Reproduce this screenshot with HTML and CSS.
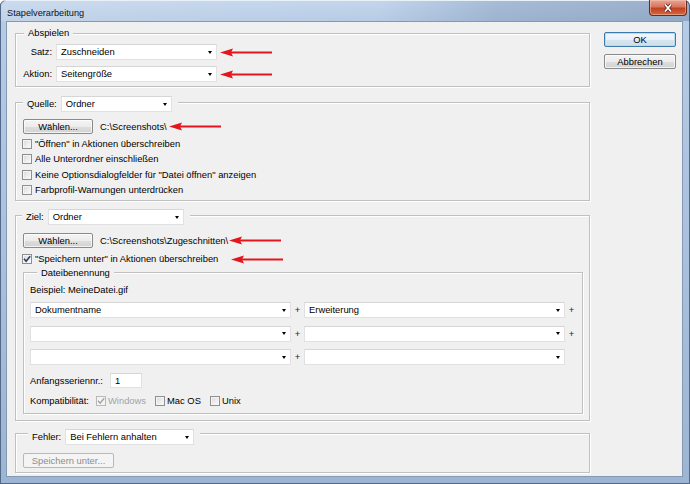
FILE: index.html
```html
<!DOCTYPE html>
<html>
<head>
<meta charset="utf-8">
<title>Stapelverarbeitung</title>
<link rel="stylesheet" href="styles.css">
</head>
<body>
<div class="window">
  <div class="titlebar">
    <span class="title">Stapelverarbeitung</span>
    <div class="close">
      <svg width="12" height="10" viewBox="0 0 12 10"><path d="M3 1.5 L9 8.5 M9 1.5 L3 8.5" stroke="#5b1f14" stroke-width="3.4" fill="none"/><path d="M3 1.5 L9 8.5 M9 1.5 L3 8.5" stroke="#fff" stroke-width="1.8" fill="none"/></svg>
    </div>
  </div>
  <div class="client">
    <div class="main">
      <div class="group g-play">
        <div class="legend lg-play"><span>Abspielen</span></div>
        <div class="play-grid">
          <span class="lbl">Satz:</span>
          <div class="sel w-play"><span>Zuschneiden</span><i class="caret"></i></div>
          <svg class="arrow" width="52" height="9" viewBox="0 0 52 9"><path d="M0 4.5 L13 0.5 L11 4.5 L13 8.5 Z" fill="#e2161c"/><rect x="10" y="3.5" width="42" height="2" fill="#e2161c"/></svg>
          <span class="lbl">Aktion:</span>
          <div class="sel w-play"><span>Seitengröße</span><i class="caret"></i></div>
          <svg class="arrow" width="52" height="9" viewBox="0 0 52 9"><path d="M0 4.5 L13 0.5 L11 4.5 L13 8.5 Z" fill="#e2161c"/><rect x="10" y="3.5" width="42" height="2" fill="#e2161c"/></svg>
        </div>
      </div>

      <div class="group g-src">
        <div class="legend lg-src"><span class="lg-lbl">Quelle:</span><div class="sel w-src"><span>Ordner</span><i class="caret"></i></div></div>
        <div class="pathrow">
          <button class="btn btn-pick">Wählen...</button>
          <span class="path">C:\Screenshots\</span>
          <svg class="arrow a-src" width="52" height="9" viewBox="0 0 52 9"><path d="M0 4.5 L13 0.5 L11 4.5 L13 8.5 Z" fill="#e2161c"/><rect x="10" y="3.5" width="42" height="2" fill="#e2161c"/></svg>
        </div>
        <div class="cblist">
          <label class="cbrow"><span class="cb"></span>"Öffnen" in Aktionen überschreiben</label>
          <label class="cbrow"><span class="cb"></span>Alle Unterordner einschließen</label>
          <label class="cbrow"><span class="cb"></span>Keine Optionsdialogfelder für "Datei öffnen" anzeigen</label>
          <label class="cbrow"><span class="cb"></span>Farbprofil-Warnungen unterdrücken</label>
        </div>
      </div>

      <div class="group g-dst">
        <div class="legend lg-dst"><span class="lg-lbl">Ziel:</span><div class="sel w-dst"><span>Ordner</span><i class="caret"></i></div></div>
        <div class="pathrow pr-dst">
          <button class="btn btn-pick">Wählen...</button>
          <span class="path">C:\Screenshots\Zugeschnitten\</span>
          <svg class="arrow a-dst" width="52" height="9" viewBox="0 0 52 9"><path d="M0 4.5 L13 0.5 L11 4.5 L13 8.5 Z" fill="#e2161c"/><rect x="10" y="3.5" width="42" height="2" fill="#e2161c"/></svg>
        </div>
        <div class="cbrow cb-save">
          <span class="cb"><svg width="8" height="8" viewBox="0 0 8 8"><path d="M1 3.8 L3.1 6.2 L7.2 1.2" stroke="#2b3a6b" stroke-width="1.6" fill="none"/></svg></span>
          <span>"Speichern unter" in Aktionen überschreiben</span>
          <svg class="arrow a-save" width="52" height="9" viewBox="0 0 52 9"><path d="M0 4.5 L13 0.5 L11 4.5 L13 8.5 Z" fill="#e2161c"/><rect x="10" y="3.5" width="42" height="2" fill="#e2161c"/></svg>
        </div>

        <div class="group g-name">
          <div class="legend lg-name"><span>Dateibenennung</span></div>
          <div class="example">Beispiel: MeineDatei.gif</div>
          <div class="name-grid">
            <div class="sel"><span>Dokumentname</span><i class="caret"></i></div>
            <span class="plus">+</span>
            <div class="sel"><span>Erweiterung</span><i class="caret"></i></div>
            <span class="plus">+</span>
            <div class="sel"><span></span><i class="caret"></i></div>
            <span class="plus">+</span>
            <div class="sel"><span></span><i class="caret"></i></div>
            <span class="plus">+</span>
            <div class="sel"><span></span><i class="caret"></i></div>
            <span class="plus">+</span>
            <div class="sel"><span></span><i class="caret"></i></div>
            <span class="plus"></span>
          </div>
          <div class="serial">
            <span class="serial-lbl">Anfangsseriennr.:</span>
            <div class="input">1</div>
          </div>
          <div class="compat">
            <span class="compat-lbl">Kompatibilität:</span>
            <span class="opt disabled"><span class="cb cb-dis"><svg width="8" height="8" viewBox="0 0 8 8"><path d="M1 3.8 L3.1 6.2 L7.2 1.2" stroke="#a4a4a4" stroke-width="1.4" fill="none"/></svg></span>Windows</span>
            <span class="opt"><span class="cb"></span>Mac OS</span>
            <span class="opt"><span class="cb"></span>Unix</span>
          </div>
        </div>
      </div>

      <div class="group g-err">
        <div class="legend lg-err"><span class="lg-lbl">Fehler:</span><div class="sel w-err"><span>Bei Fehlern anhalten</span><i class="caret"></i></div></div>
        <button class="btn btn-save" disabled>Speichern unter...</button>
      </div>
    </div>

    <div class="side">
      <button class="btn btn-side btn-ok">OK</button>
      <button class="btn btn-side">Abbrechen</button>
    </div>
  </div>
</div>
</body>
</html>
```
FILE: styles.css
```css
html, body {
  margin: 0;
  padding: 0;
}
body {
  font-family: "Liberation Sans", Arial, sans-serif;
  font-size: 9.4px;
  color: #000;
  background: #fff;
}
.window {
  width: 690px;
  height: 484px;
  box-sizing: border-box;
  display: flex;
  flex-direction: column;
  background: linear-gradient(180deg, #c3d6ec 0px, #b6cbe4 22px, #a8bfda 60%, #9cb5d2 100%);
  box-shadow: inset 0 0 0 1px #53698a;
  border-radius: 6px 6px 0 0;
  overflow: hidden;
}
.titlebar {
  height: 21px;
  display: flex;
  justify-content: space-between;
  align-items: flex-start;
  background: linear-gradient(90deg, rgba(255,255,255,0.15) 0%, rgba(255,255,255,0) 55%, rgba(40,70,110,0.18) 72%, rgba(50,80,120,0.28) 100%);
  box-shadow: inset 0 1px 0 #e8f0f8, inset 1px 0 0 #53698a;
}
.title {
  margin: 7px 0 0 7px;
  font-size: 9.2px;
  line-height: 12px;
  color: #111;
}
.close {
  width: 38px;
  height: 16px;
  margin-right: 3px;
  box-sizing: border-box;
  border: 1px solid #6b2a1f;
  border-top: none;
  border-radius: 0 0 4px 4px;
  background: linear-gradient(180deg, #e7a494 0%, #d8765f 45%, #c2411f 55%, #cf6a45 100%);
  box-shadow: inset 0 0 0 1px rgba(255,210,190,0.45);
  display: flex;
  align-items: center;
  justify-content: center;
}
.client {
  flex: 1;
  margin: 0 7px 7px 6px;
  box-sizing: border-box;
  background: #f0f0f0;
  border: 1px solid #8599b4;
  display: flex;
  align-items: flex-start;
}
.main {
  width: 575px;
  margin-left: 8px;
  padding-top: 11px;
}
.side {
  margin-left: 14px;
  padding-top: 10px;
  display: flex;
  flex-direction: column;
  gap: 7px;
}

/* group boxes */
.group {
  border: 1px solid #c0c0c0;
  box-shadow: inset 1px 1px 0 #fff, 1px 1px 0 #fff;
  padding-left: 6px;
}
.legend {
  display: flex;
  align-items: center;
  width: max-content;
  background: #f0f0f0;
  padding: 0 4px;
  line-height: 12px;
}
.lg-lbl {
  margin-right: 4px;
}
.lg-play { margin: -7px 0 0 2px; height: 12px; }
.lg-src { margin: -7px 0 0 1px; height: 16px; padding-right: 6px; }
.lg-dst { margin: -7px 0 0 0; height: 16px; padding-right: 6px; }
.lg-name { margin: -6px 0 0 7px; height: 12px; }
.lg-err { margin: -5px 0 0 6px; height: 16px; padding-right: 6px; }

.g-play { padding-bottom: 4px; }
.g-src { margin-top: 15px; padding-bottom: 2px; }
.g-dst { margin-top: 14px; padding-bottom: 6px; }
.g-err { margin-top: 12px; padding-bottom: 4px; }

/* select-like dropdowns */
.sel {
  display: flex;
  align-items: center;
  height: 16px;
  box-sizing: border-box;
  background: #fff;
  border: 1px solid #e1e1e1;
  border-top-color: #d6d6d6;
  padding-left: 4px;
  line-height: 14px;
  white-space: nowrap;
}
.caret {
  margin-left: auto;
  margin-right: 4px;
  width: 0;
  height: 0;
  border-left: 2.5px solid transparent;
  border-right: 2.5px solid transparent;
  border-top: 3px solid #000;
}
.w-play { width: 161px; }
.w-src { width: 111px; }
.w-dst { width: 136px; }
.w-err { width: 129px; }

.play-grid {
  display: grid;
  grid-template-columns: 30px 161px auto;
  column-gap: 4px;
  row-gap: 6px;
  margin-top: 5px;
  align-items: center;
}
.lbl {
  text-align: right;
  line-height: 12px;
}
.arrow {
  display: block;
  margin-left: -1px;
}

/* buttons */
.btn {
  font-family: inherit;
  font-size: 9.4px;
  color: #000;
  height: 15px;
  box-sizing: border-box;
  padding: 0;
  border: 1px solid #8a8a8a;
  border-radius: 2px;
  background: linear-gradient(180deg, #f4f4f4 0%, #ececec 50%, #dedede 51%, #d2d2d2 100%);
  box-shadow: inset 0 0 0 1px rgba(255,255,255,0.7);
  line-height: 13px;
}
.btn-side { width: 72px; }
.btn-ok {
  border-color: #3d7bad;
  box-shadow: inset 0 0 0 1px #b6dcf4;
  background: linear-gradient(180deg, #f2f8fc 0%, #e8f1f8 50%, #d9e6f0 51%, #cfdde9 100%);
}
.btn-pick { width: 70px; margin-left: 1px; }
.btn-save {
  width: 91px;
  margin-left: 1px;
  margin-top: 8px;
  display: block;
  color: #8c8c8c;
  border-color: #b5b9bc;
  background: #f4f4f4;
  box-shadow: none;
}

.pathrow {
  display: flex;
  align-items: center;
  margin-top: 7px;
}
.pr-dst { margin-top: 8px; }
.path {
  margin-left: 7px;
  line-height: 12px;
}
.a-src { margin-left: 2px; }
.a-dst { margin-left: 1px; }

.cblist {
  margin-top: 2px;
}
.cbrow {
  display: flex;
  align-items: center;
  height: 15.5px;
  line-height: 12px;
  white-space: nowrap;
}
.cb {
  width: 10px;
  height: 10px;
  box-sizing: border-box;
  border: 1px solid #8e8f8f;
  background: linear-gradient(135deg, #d9d9d9 0%, #f2f2f2 70%, #fbfbfb 100%);
  box-shadow: inset 0 0 0 1px #f4f4f4;
  margin-right: 3px;
  display: flex;
  align-items: center;
  justify-content: center;
  flex: none;
}
.cb-save {
  height: 16px;
  margin-top: 3px;
}
.a-save { margin-left: 13px; }

.g-name {
  margin: 5px 6px 0 1px;
  padding-left: 6px;
  padding-bottom: 5px;
}
.example {
  margin-top: 5px;
  line-height: 12px;
}
.name-grid {
  display: grid;
  grid-template-columns: 261px 13px 261px 13px;
  grid-auto-rows: 16px;
  row-gap: 7.5px;
  margin-top: 6px;
  align-items: center;
}
.plus {
  text-align: center;
  line-height: 12px;
  color: #222;
}
.serial {
  display: flex;
  align-items: center;
  margin-top: 8px;
  height: 15px;
}
.serial-lbl {
  width: 80px;
}
.input {
  width: 32px;
  height: 15px;
  box-sizing: border-box;
  background: #fff;
  border: 1px solid #e1e1e1;
  border-top-color: #d6d6d6;
  padding-left: 4px;
  line-height: 13px;
}
.compat {
  display: flex;
  align-items: center;
  height: 14px;
  margin-top: 6px;
  line-height: 12px;
}
.compat-lbl {
  width: 66px;
}
.opt {
  display: flex;
  align-items: center;
  margin-right: 9px;
}
.opt .cb { margin-right: 2px; }
.disabled { color: #a3a3a3; }
.cb-dis {
  border-color: #b9b9b9;
  background: #f4f4f4;
}
```
